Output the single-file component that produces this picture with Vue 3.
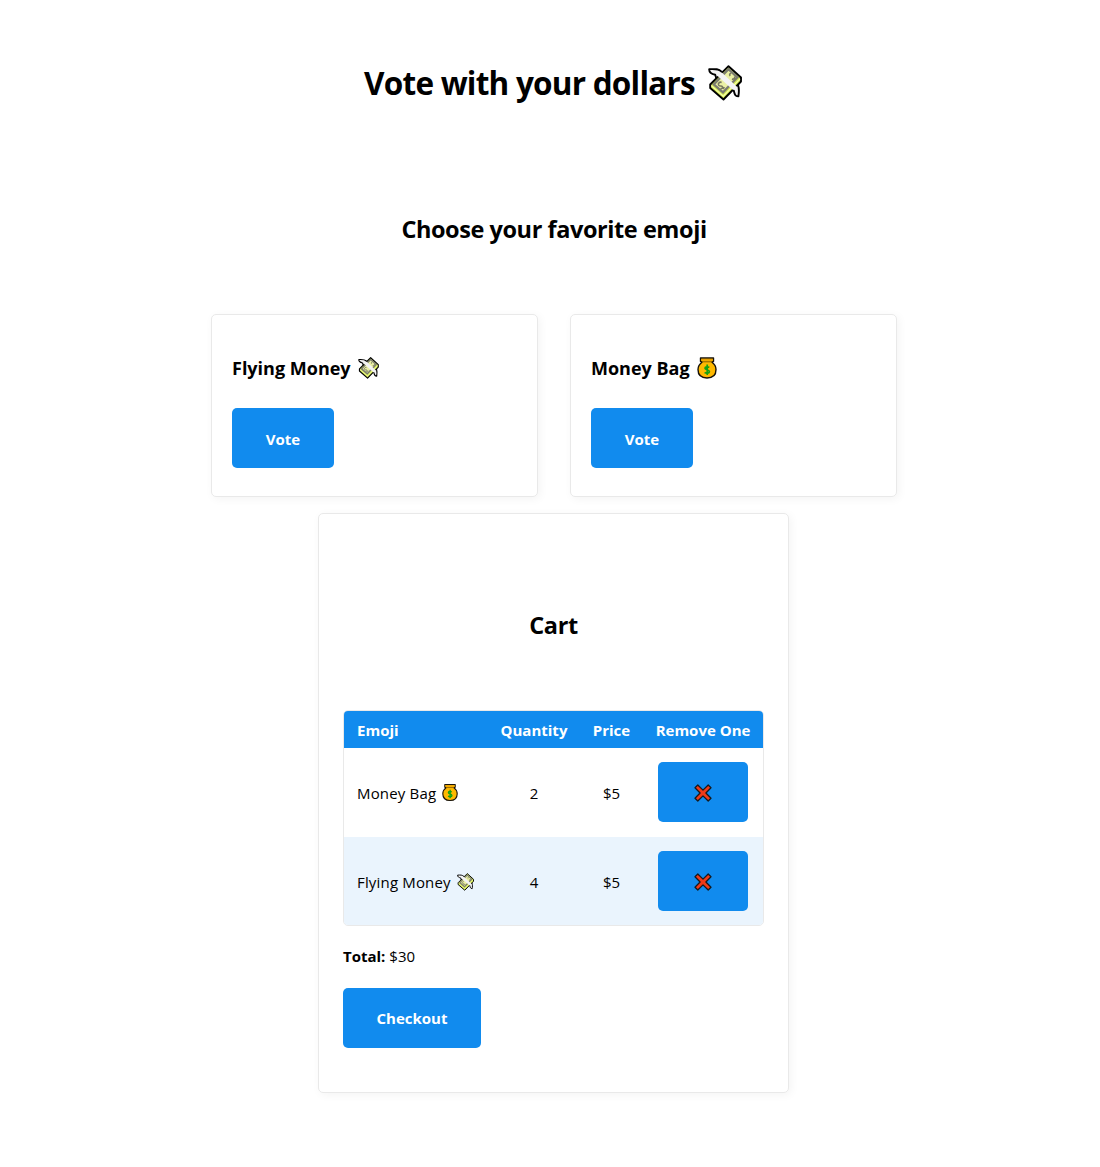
<script setup>
import { computed, h, ref } from 'vue'

const products = [
  { id: 'flying', name: 'Flying Money', price: 5 },
  { id: 'bag', name: 'Money Bag', price: 5 },
]
const cart = ref([
  { id: 'bag', quantity: 2 },
  { id: 'flying', quantity: 4 },
])
const find = (id) => products.find((p) => p.id === id)
const total = computed(() => cart.value.reduce((sum, row) => sum + row.quantity * find(row.id).price, 0))

function vote(id) {
  const row = cart.value.find((r) => r.id === id)
  if (row) row.quantity++
  else cart.value.push({ id, quantity: 1 })
}
function removeOne(id) {
  const row = cart.value.find((r) => r.id === id)
  row.quantity--
  cart.value = cart.value.filter((r) => r.quantity > 0)
}

const FlyingMoney = () =>
  h('svg', { viewBox: '0 0 34 36', 'aria-hidden': 'true' }, [
    h('path', { d: 'M20.5 1.2 33 12.5V16.5L15.5 34.5 2.2 23V19.5Z', fill: '#d3e84f', stroke: '#000', 'stroke-width': 1.9, 'stroke-linejoin': 'round' }),
    h('path', { d: 'M3.2 20.6 15.3 31.2 32 13.8', fill: 'none', stroke: '#f6ffb0', 'stroke-width': 1.1 }),
    h('path', { d: 'M20.5 4.2 29.4 12.4 15 27.3 5.8 19.4Z', fill: '#eaf0a4', stroke: '#7b7c70', 'stroke-width': 2.3 }),
    h('path', { d: 'M23.2 8.2c-1.6.2-2 1.8-1 2.8M26.6 11.4c.6 1.8-1 3.2-2.6 2.6M13.6 17.4c-2-.8-4 1-3 2.7s3 .3 3.8 1.5-.6 2.5-2 1.9M16.5 22.3 14.8 24', fill: 'none', stroke: '#77785f', 'stroke-width': 1.6 }),
    h('path', { d: 'M1 4.2C5 4 9 3.5 12 5.8L29.2 22C31 24.3 31 27 30.3 31.2L27.6 31C26.4 28.5 27 26 24.5 24.5L10.5 11.8C8.5 9.8 4 9.5 1.4 8Z', fill: '#f3f3f3' }),
    h('path', { d: 'M13.5 6.6C10.5 3.6 7 4 1.2 4.2 1 7.6 3.5 9 7.2 9.8L8.2 13M30.2 20.5C31.3 24 31 27.5 30.4 31.3 27 31.5 26.6 29 25.8 25.7', fill: 'none', stroke: '#000', 'stroke-width': 1.9, 'stroke-linejoin': 'round', 'stroke-linecap': 'round' }),
  ])

const MoneyBag = () =>
  h('svg', { viewBox: '0 0 20 22', 'aria-hidden': 'true' }, [
    h('path', { d: 'M3.5 1H16.5V4.4L15 5.2C17.5 7 19 9.5 19 12.5 19 18 15.4 21 10 21S1 18 1 12.5C1 9.5 2.5 7 5 5.2L3.5 4.4Z', fill: '#ffb900', stroke: '#17120a', 'stroke-width': 1.4, 'stroke-linejoin': 'round' }),
    h('path', { d: 'M4.3 1.8H15.7V3.6H4.3Z', fill: '#e9a000' }),
    h('path', { d: 'M5 4.8H15', stroke: '#875a00', 'stroke-width': 1 }),
    h('path', { d: 'M12.3 10.4C10.6 9.4 8 9.5 8 11.2S12.4 12.6 12.4 14.6 9.5 16.7 7.6 15.6M10.2 7.6V18.1', fill: 'none', stroke: '#16a012', 'stroke-width': 1.7 }),
  ])

const icons = { flying: FlyingMoney, bag: MoneyBag }
</script>

<template>
  <main>
    <h1><span>Vote with your dollars</span><FlyingMoney class="emoji" /></h1>
    <h2 class="choose"><span>Choose your favorite emoji</span></h2>
    <section class="products">
      <article v-for="p in products" :key="p.id" class="product">
        <h3><span :class="p.id">{{ p.name }}</span><component :is="icons[p.id]" :class="['emoji', p.id]" /></h3>
        <button class="vote" @click="vote(p.id)">Vote</button>
      </article>
    </section>
    <section class="cart">
      <h2><span>Cart</span></h2>
      <table>
        <colgroup><col class="c1" /><col class="c2" /><col class="c3" /><col class="c4" /></colgroup>
        <thead>
          <tr><th>Emoji</th><th>Quantity</th><th>Price</th><th>Remove One</th></tr>
        </thead>
        <tbody>
          <tr v-for="row in cart" :key="row.id">
            <td><div class="name"><span>{{ find(row.id).name }}</span><component :is="icons[row.id]" :class="['emoji', row.id]" /></div></td>
            <td>{{ row.quantity }}</td>
            <td>${{ find(row.id).price }}</td>
            <td>
              <button class="remove" aria-label="Remove one" @click="removeOne(row.id)">
                <svg viewBox="0 0 18 18"><path d="M3.8 1 9 6.1 14.2 1 17 3.8 11.9 9 17 14.2 14.2 17 9 11.9 3.8 17 1 14.2 6.1 9 1 3.8Z" fill="#f03a17" stroke="#151b20" stroke-width="1.3" stroke-linejoin="round" /></svg>
              </button>
            </td>
          </tr>
        </tbody>
      </table>
      <p class="total"><strong>Total:</strong> ${{ total }}</p>
      <button class="checkout">Checkout</button>
    </section>
  </main>
</template>

<style>
body {
  margin: 0;
  background: #fff;
}
</style>

<style scoped>
main {
  box-sizing: border-box;
  width: 1100px;
  height: 1167px;
  padding: 58px 0 0 8px;
  display: flex;
  flex-direction: column;
  align-items: center;
  color: #000;
  font-family: "Open Sans", "Noto Sans", sans-serif;
  font-size: 15px;
  line-height: 24px;
}
h1, h2, h3, p {
  margin: 0;
  white-space: nowrap;
}
h1 {
  display: flex;
  align-items: center;
  height: 50px;
  margin-right: 2px;
  font-size: 31.5px;
  letter-spacing: -0.77px;
}
h1 .emoji {
  width: 34px;
  height: 36px;
  margin-left: 13px;
}
h2 {
  font-size: 23.5px;
  line-height: 36px;
  letter-spacing: -0.43px;
  text-align: center;
}
.choose {
  margin-top: 103px;
}
.products {
  display: flex;
  gap: 32px;
  margin-top: 67px;
}
.product, .cart {
  box-sizing: border-box;
  border: 1px solid #e9e9e9;
  border-radius: 5px;
  box-shadow: 2px 2px 10px #f4f4f4;
}
.product {
  width: 327px;
  height: 183px;
  padding: 39px 20px 0;
}
h3 {
  display: flex;
  align-items: center;
  height: 28px;
  font-size: 18px;
}
h3 .emoji.flying {
  width: 21px;
  height: 22px;
  margin-left: 7px;
}
h3 .emoji.bag {
  width: 20px;
  height: 22px;
  margin-left: 7px;
}
button {
  display: block;
  height: 60px;
  padding: 2px 0 0;
  border: 0;
  border-radius: 5px;
  background: #118bee;
  color: #fff;
  font: 700 15px/24px "Open Sans", "Noto Sans", sans-serif;
}
.vote {
  width: 102px;
  margin-top: 26px;
}
.cart {
  width: 471px;
  height: 580px;
  margin-top: 16px;
  margin-right: 1px;
  padding: 93px 24px 0;
}
table {
  box-sizing: border-box;
  table-layout: fixed;
  width: 421px;
  height: 216px;
  margin-top: 67px;
  border: 1px solid #e9e9e9;
  border-radius: 5px;
  border-spacing: 0;
  overflow: hidden;
}
.c1 { width: 144px; }
.c2 { width: 92px; }
.c3 { width: 63px; }
.c4 { width: 120px; }
th, td {
  padding: 0;
  text-align: center;
  white-space: nowrap;
}
th {
  height: 37px;
  background: #118bee;
  color: #fff;
}
td {
  height: 88px;
}
th:first-child, td:first-child {
  padding-left: 13px;
  text-align: left;
}
tbody tr:first-child td {
  height: 89px;
}
tbody tr:first-child .remove {
  margin-bottom: 1px;
}
tbody tr:nth-child(even) {
  background: #eaf4fd;
}
tbody tr:nth-child(even) td:not(:last-child) {
  box-sizing: border-box;
  padding-top: 1px;
}
.name {
  display: flex;
  align-items: center;
  letter-spacing: 0.17px;
}
.name .emoji.bag {
  width: 16px;
  height: 19px;
  margin-left: 6px;
}
.name .emoji.flying {
  width: 17px;
  height: 18px;
  margin-left: 6px;
}
.remove {
  display: flex;
  align-items: center;
  justify-content: center;
  width: 90px;
  margin: 0 auto;
}
.remove svg {
  width: 18px;
  height: 18px;
}
.total {
  margin-top: 18px;
}
.checkout {
  width: 138px;
  margin-top: 20px;
  padding-top: 0;
}
</style>
